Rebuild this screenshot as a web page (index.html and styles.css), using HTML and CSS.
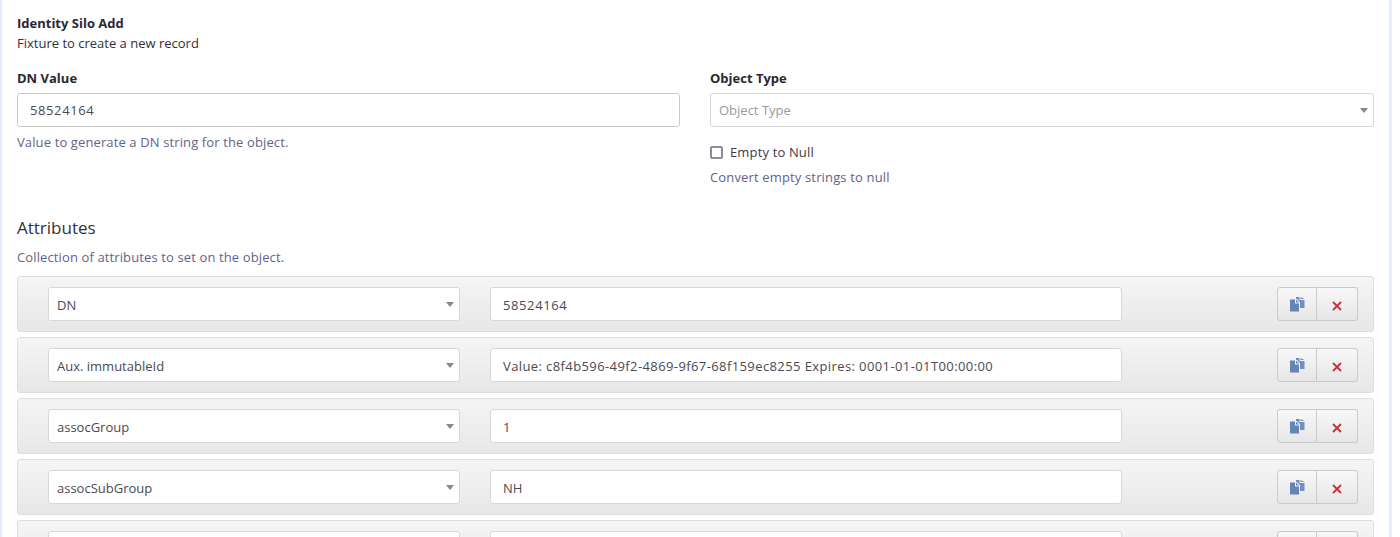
FILE: index.html
```html
<!DOCTYPE html>
<html lang="en">
<head>
<meta charset="utf-8">
<title>Identity Silo Add</title>
<link rel="stylesheet" href="styles.css">
</head>
<body>
<main class="panel">
  <h1 class="title">Identity Silo Add</h1>
  <p class="subtitle">Fixture to create a new record</p>
  <div class="fields">
    <div class="field">
      <label class="label">DN Value</label>
      <div class="control strong digits">58524164</div>
      <p class="help">Value to generate a DN string for the object.</p>
    </div>
    <div class="field">
      <label class="label">Object Type</label>
      <div class="control select placeholder">Object Type<span class="caret"></span></div>
      <div class="check"><span class="box"></span>Empty to Null</div>
      <p class="help">Convert empty strings to null</p>
    </div>
  </div>
  <h2 class="section">Attributes</h2>
  <p class="help section-help">Collection of attributes to set on the object.</p>
  <div class="rows">
    <div class="row">
      <div class="control select">DN<span class="caret"></span></div>
      <div class="control digits">58524164</div>
      <div class="btns">
        <button class="btn"><svg class="copy" viewBox="0 0 16 16"><use href="#copy"/></svg></button>
        <button class="btn del"><svg class="x" viewBox="0 0 10 10"><use href="#x"/></svg></button>
      </div>
    </div>
    <div class="row">
      <div class="control select">Aux. immutableId<span class="caret"></span></div>
      <div class="control num">Value: c8f4b596-49f2-4869-9f67-68f159ec8255 Expires: 0001-01-01T00:00:00</div>
      <div class="btns">
        <button class="btn"><svg class="copy" viewBox="0 0 16 16"><use href="#copy"/></svg></button>
        <button class="btn del"><svg class="x" viewBox="0 0 10 10"><use href="#x"/></svg></button>
      </div>
    </div>
    <div class="row">
      <div class="control select">assocGroup<span class="caret"></span></div>
      <div class="control">1</div>
      <div class="btns">
        <button class="btn"><svg class="copy" viewBox="0 0 16 16"><use href="#copy"/></svg></button>
        <button class="btn del"><svg class="x" viewBox="0 0 10 10"><use href="#x"/></svg></button>
      </div>
    </div>
    <div class="row">
      <div class="control select">assocSubGroup<span class="caret"></span></div>
      <div class="control">NH</div>
      <div class="btns">
        <button class="btn"><svg class="copy" viewBox="0 0 16 16"><use href="#copy"/></svg></button>
        <button class="btn del"><svg class="x" viewBox="0 0 10 10"><use href="#x"/></svg></button>
      </div>
    </div>
    <div class="row">
      <div class="control select"><span class="caret"></span></div>
      <div class="control"></div>
      <div class="btns">
        <button class="btn"><svg class="copy" viewBox="0 0 16 16"><use href="#copy"/></svg></button>
        <button class="btn del"><svg class="x" viewBox="0 0 10 10"><use href="#x"/></svg></button>
      </div>
    </div>
  </div>
</main>
<svg class="defs" width="0" height="0" aria-hidden="true">
  <symbol id="copy" viewBox="0 0 16 16">
    <path d="M1 3.500H6V7.500H10V15.500H1Z" fill="#6585b3"/>
    <path d="M7 3.500L10 6.500H7Z" fill="#6585b3"/>
    <path d="M7 1H10.500V4H15.500V12H11V6L8 3H7Z" fill="#7090bd"/>
    <path d="M11.500 1L15.500 3H11.500Z" fill="#7090bd"/>
  </symbol>
  <symbol id="x" viewBox="0 0 10 10">
    <path d="M1 1L9 9M9 1L1 9" stroke="#c9303a" stroke-width="1.800" fill="none"/>
  </symbol>
</svg>
</body>
</html>
```
FILE: styles.css
```css
* { box-sizing: border-box; }
html, body { height: 537px; overflow: hidden; }
body {
  margin: 0;
  background: #fff;
  font-family: "Open Sans", "Noto Sans", sans-serif;
  font-size: 13px;
  color: #32303a;
}
.panel {
  width: 1392px;
  height: 537px;
  overflow: hidden;
  padding: 14px 15px 0 15px;
  border-left: 2px solid #e3edfa;
  border-right: 3px solid #e3edfa;
}
.title { margin: 0; font-size: 13px; line-height: 18px; font-weight: 700; color: #2a2833; }
.subtitle { margin: 2px 0 0; font-size: 13px; line-height: 18px; }
.fields { display: grid; grid-template-columns: 663px 664px; column-gap: 30px; margin-top: 17px; }
.label { display: block; font-size: 13px; line-height: 18px; font-weight: 700; color: #2a2833; margin-bottom: 6px; }
.control {
  position: relative;
  height: 34px;
  padding: 0 12px;
  line-height: 32px;
  background: #fff;
  border: 1px solid #d8d8d8;
  border-radius: 3px;
  font-size: 13px;
  color: #4a4a52;
  white-space: nowrap;
  overflow: hidden;
}
.row .control { line-height: 34px; }
.strong { border-color: #c9c9c9; }
.num { letter-spacing: .4px; }
.digits { letter-spacing: .6px; }
.select { padding-left: 8px; }
.placeholder { color: #9a9a9a; }
.caret {
  position: absolute;
  right: 5px;
  top: 14px;
  border-left: 4px solid transparent;
  border-right: 4px solid transparent;
  border-top: 5px solid #888;
}
.help { margin: 6px 0 0; font-size: 13px; line-height: 18px; letter-spacing: .12px; color: #63638a; }
.check { display: flex; align-items: center; margin-top: 16px; line-height: 18px; letter-spacing: .15px; color: #3c3a4a; }
.box { width: 13px; height: 13px; border: 2px solid #8b8b99; border-radius: 2px; margin-right: 7px; }
.check + .help { margin-top: 7px; letter-spacing: .15px; }
.section { margin: 30px 0 0; font-size: 17px; line-height: 24px; font-weight: 400; color: #32303a; }
.section-help { margin-top: 8px; }
.rows { display: flex; flex-direction: column; gap: 5px; margin-top: 10px; }
.row {
  height: 56px;
  flex: none;
  display: grid;
  grid-template-columns: 412px 632px 1fr;
  column-gap: 30px;
  align-items: center;
  padding: 0 15px 0 30px;
  background: linear-gradient(#f5f5f5, #e7e7e7);
  border: 1px solid #dedede;
  border-radius: 3px;
}
.btns { display: flex; height: 34px; justify-self: end; }
.btn {
  width: 40px;
  padding: 0;
  display: flex;
  align-items: center;
  justify-content: center;
  background: linear-gradient(#f8f8f8, #e6e6e6);
  border: 1px solid #cbcbcb;
  border-radius: 3px 0 0 3px;
}
.btn + .btn { width: 41px; border-left: 0; border-radius: 0 3px 3px 0; }
.copy { width: 16px; height: 16px; }
.x { width: 10px; height: 10px; margin-top: 3px; }
.defs { position: absolute; }
```
